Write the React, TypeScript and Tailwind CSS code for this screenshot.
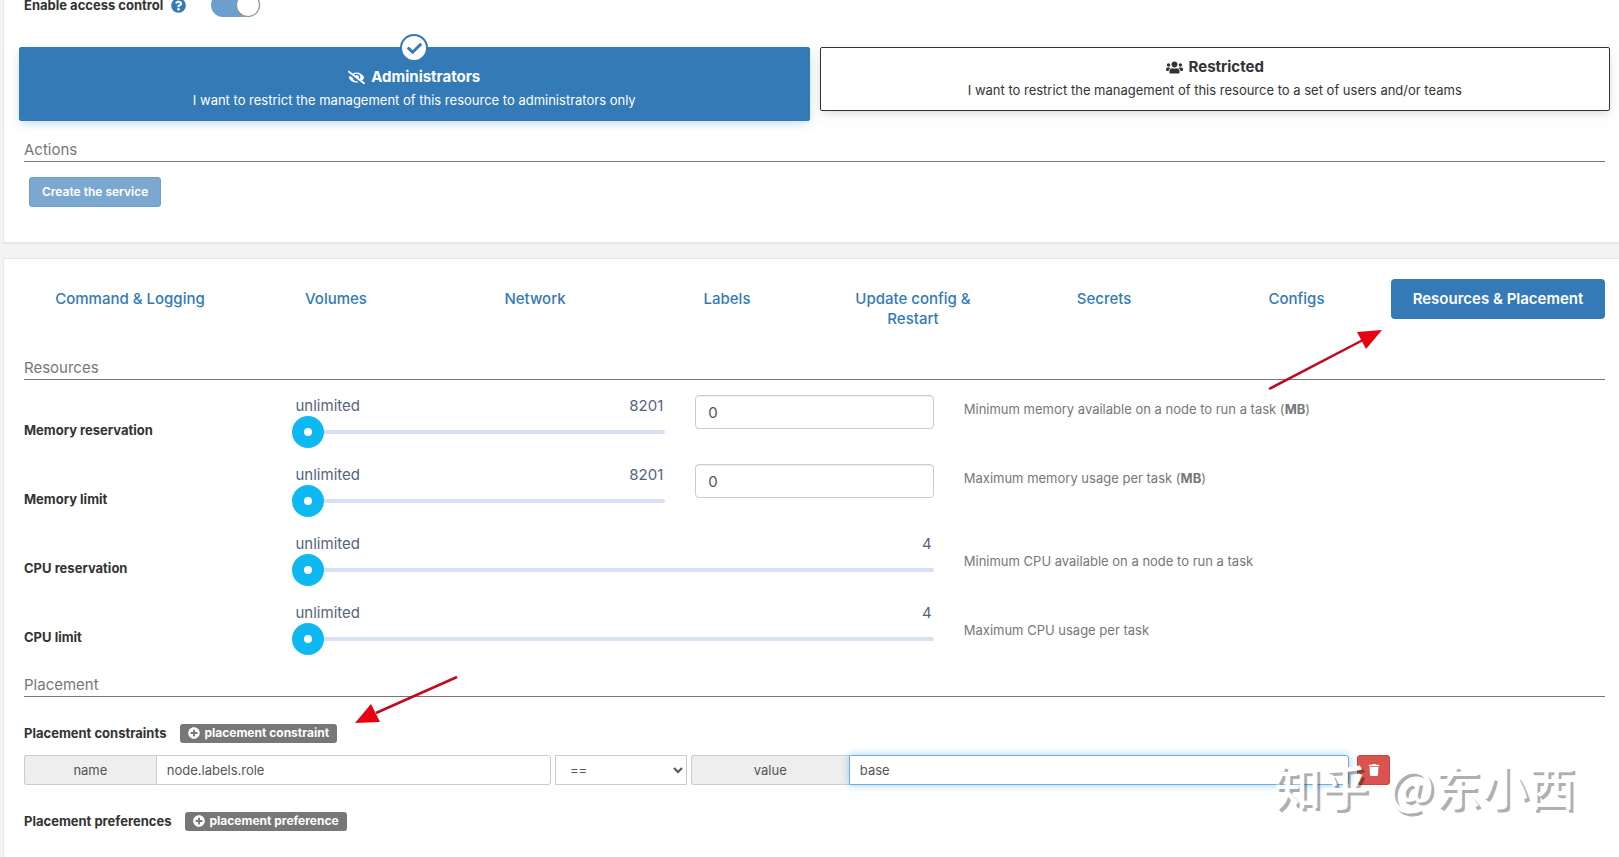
import { useState, type ReactNode } from 'react';
import { FaCheck, FaEyeSlash, FaPlusCircle, FaQuestionCircle, FaTrash, FaUsers } from 'react-icons/fa';

const tabs = [
  'Command & Logging',
  'Volumes',
  'Network',
  'Labels',
  'Update config & Restart',
  'Secrets',
  'Configs',
  'Resources & Placement',
];

const SectionTitle = ({ children }: { children: ReactNode }) => (
  <h2 className="border-b border-[#777] pb-px text-[15px] leading-5 text-[#777]">{children}</h2>
);

type OwnershipBoxProps = {
  icon: ReactNode;
  title: string;
  description: string;
  checked: boolean;
  onSelect: () => void;
};

const OwnershipBox = ({ icon, title, description, checked, onSelect }: OwnershipBoxProps) => (
  <label
    className={
      checked
        ? 'relative cursor-pointer rounded-xs border border-[#337ab7] bg-[#337ab7] pt-[19px] pb-2.5 text-white shadow-[0_3px_10px_-2px_rgba(100,170,200,0.5)]'
        : 'relative cursor-pointer rounded-xs border border-[#333] bg-white pt-[9px] pb-2.5 shadow-[0_3px_10px_-2px_rgba(160,160,160,0.5)]'
    }
  >
    <input type="radio" name="ownership" className="sr-only" checked={checked} onChange={onSelect} />
    {checked && (
      <span className="absolute -top-3.5 left-1/2 flex size-7 -translate-x-1/2 items-center justify-center rounded-full border-2 border-[#337ab7] bg-white text-[#337ab7]">
        <FaCheck size={15} />
      </span>
    )}
    <span className="flex items-center justify-center gap-1.5 text-[15px] leading-5 font-bold">
      {icon}
      {title}
    </span>
    <span className="mt-[3px] block">{description}</span>
  </label>
);

type SliderProps = {
  id: string;
  value: number;
  max: number;
  step?: number;
  onChange: (value: number) => void;
};

const Slider = ({ id, value, max, step = 1, onChange }: SliderProps) => (
  <div className="-ml-px">
    <div className="flex justify-between pr-0.5 pl-1 text-[15px] leading-5 text-[#55637d]">
      <span>{value === 0 ? 'unlimited' : value}</span>
      <span>{max}</span>
    </div>
    <input
      id={id}
      type="range"
      min={0}
      max={max}
      step={step}
      value={value}
      onChange={(e) => onChange(Number(e.target.value))}
      className="block h-8 w-full cursor-pointer appearance-none bg-transparent [&::-webkit-slider-runnable-track]:h-1 [&::-webkit-slider-runnable-track]:rounded-full [&::-webkit-slider-runnable-track]:bg-[#d8e0f3] [&::-webkit-slider-thumb]:-mt-3.5 [&::-webkit-slider-thumb]:size-8 [&::-webkit-slider-thumb]:appearance-none [&::-webkit-slider-thumb]:rounded-full [&::-webkit-slider-thumb]:border-12 [&::-webkit-slider-thumb]:border-[#0db9f0] [&::-webkit-slider-thumb]:bg-white"
    />
  </div>
);

type ResourceRowProps = {
  id: string;
  label: string;
  max: number;
  help: ReactNode;
  step?: number;
  withInput?: boolean;
};

const ResourceRow = ({ id, label, max, help, step, withInput }: ResourceRowProps) => {
  const [value, setValue] = useState(0);

  return (
    <div className="grid h-[69px] grid-cols-12 items-start gap-x-[30px]">
      <label htmlFor={id} className="col-span-2 pt-[25px] font-bold">
        {label}
      </label>
      <div className={withInput ? 'col-span-3 pt-px' : 'col-span-5 pt-px'}>
        <Slider id={id} value={value} max={max} step={step} onChange={setValue} />
      </div>
      {withInput && (
        <div className="col-span-2">
          <input
            type="number"
            aria-label={`${label} (MB)`}
            min={0}
            max={max}
            value={value}
            onChange={(e) => setValue(Number(e.target.value))}
            className="block h-[34px] w-full appearance-none rounded border border-[#ccc] bg-white px-3 text-[15px] text-[#555] shadow-[inset_0_1px_1px_rgba(0,0,0,0.075)]"
          />
        </div>
      )}
      <p className={withInput ? 'col-span-5 pt-1 text-[#777]' : 'col-span-5 pt-[18px] text-[#777]'}>{help}</p>
    </div>
  );
};

const AddButton = ({ children }: { children: ReactNode }) => (
  <button
    type="button"
    className="flex h-[19px] cursor-pointer items-center gap-1 rounded-[3px] bg-[#777] px-2 text-xs font-bold text-white"
  >
    <FaPlusCircle size={12} />
    {children}
  </button>
);

const App = () => {
  const [accessControl, setAccessControl] = useState(true);
  const [ownership, setOwnership] = useState('administrators');
  const [active, setActive] = useState('Resources & Placement');
  const [name, setName] = useState('node.labels.role');
  const [operator, setOperator] = useState('==');
  const [value, setValue] = useState('base');

  return (
    <div className="relative flex min-h-screen flex-col gap-3.5 overflow-hidden bg-[#f3f3f3] pl-[3px] font-[Inter,'Open_Sans',sans-serif] text-[13px] leading-5 text-[#333]">
      <section className="-mt-[7px] border-b-2 border-l border-[#e7e7e7] bg-white pr-3.5 pb-[35px] pl-5">
        <div className="flex h-6 items-center">
          <label htmlFor="access-control" className="font-bold">
            Enable access control
          </label>
          <FaQuestionCircle size={15} className="ml-2 text-[#337ab7]" />
          <input
            id="access-control"
            type="checkbox"
            checked={accessControl}
            onChange={(e) => setAccessControl(e.target.checked)}
            className="ml-[25px] h-6 w-[49px] cursor-pointer appearance-none rounded-full bg-[#bbb] before:block before:size-6 before:rounded-full before:border before:border-[#888] before:bg-white checked:bg-[#6c9fce] checked:before:ml-[25px]"
          />
        </div>

        {/* Ownership */}
        <div className="-mx-[5px] mt-[30px] grid grid-cols-2 items-start gap-2.5 text-center">
          <OwnershipBox
            icon={<FaEyeSlash size={17} />}
            title="Administrators"
            description="I want to restrict the management of this resource to administrators only"
            checked={ownership === 'administrators'}
            onSelect={() => setOwnership('administrators')}
          />
          <OwnershipBox
            icon={<FaUsers size={17} />}
            title="Restricted"
            description="I want to restrict the management of this resource to a set of users and/or teams"
            checked={ownership === 'restricted'}
            onSelect={() => setOwnership('restricted')}
          />
        </div>

        <div className="mt-[19px]">
          <SectionTitle>Actions</SectionTitle>
          <button
            type="button"
            disabled
            className="mt-[15px] ml-[5px] h-[30px] rounded-[3px] border border-[#719dc7] bg-[#7aa8d0] px-3 text-xs font-semibold text-white"
          >
            Create the service
          </button>
        </div>
      </section>

      <section className="flex-1 border-t border-l border-[#e7e7e7] bg-white pt-5 pr-3.5 pb-6 pl-5">
        <nav className="grid grid-cols-[212fr_200fr_198fr_186fr_186fr_196fr_189fr_214fr] items-start text-center text-[15px] leading-5">
          {tabs.map((tab) => (
            <a
              key={tab}
              href="#"
              onClick={(e) => {
                e.preventDefault();
                setActive(tab);
              }}
              className={
                tab === active
                  ? 'rounded bg-[#337ab7] px-3.5 py-2.5 font-semibold text-white'
                  : 'rounded px-3.5 py-2.5 font-medium text-[#337ab7]'
              }
            >
              {tab}
            </a>
          ))}
        </nav>

        <div className="mt-[19px] mb-[15px]">
          <SectionTitle>Resources</SectionTitle>
        </div>
        <ResourceRow
          id="memory-reservation"
          label="Memory reservation"
          max={8201}
          withInput
          help={
            <>
              Minimum memory available on a node to run a task (<b>MB</b>)
            </>
          }
        />
        <ResourceRow
          id="memory-limit"
          label="Memory limit"
          max={8201}
          withInput
          help={
            <>
              Maximum memory usage per task (<b>MB</b>)
            </>
          }
        />
        <ResourceRow
          id="cpu-reservation"
          label="CPU reservation"
          max={4}
          step={0.25}
          help="Minimum CPU available on a node to run a task"
        />
        <ResourceRow id="cpu-limit" label="CPU limit" max={4} step={0.25} help="Maximum CPU usage per task" />

        <div className="mt-1">
          <SectionTitle>Placement</SectionTitle>
        </div>

        {/* Placement constraints */}
        <div className="mt-[26px] flex items-center gap-3.5">
          <span className="font-bold">Placement constraints</span>
          <AddButton>placement constraint</AddButton>
        </div>
        <div className="mt-3 flex h-[30px] gap-1 text-[#555]">
          <div className="flex w-1/3 shrink-0">
            <label
              htmlFor="constraint-name"
              className="flex w-1/4 items-center justify-center rounded-l-[3px] border border-r-0 border-[#ccc] bg-[#eee]"
            >
              name
            </label>
            <input
              id="constraint-name"
              type="text"
              value={name}
              onChange={(e) => setName(e.target.value)}
              className="w-3/4 rounded-r-[3px] border border-[#ccc] bg-white px-2.5"
            />
          </div>
          <select
            aria-label="Operator"
            value={operator}
            onChange={(e) => setOperator(e.target.value)}
            className="w-1/12 shrink-0 border border-[#ccc] bg-white px-2.5"
          >
            <option>==</option>
            <option>!=</option>
          </select>
          <div className="flex w-5/12 shrink-0">
            <label
              htmlFor="constraint-value"
              className="flex w-[24%] items-center justify-center rounded-l-[3px] border border-r-0 border-[#ccc] bg-[#eee]"
            >
              value
            </label>
            <input
              id="constraint-value"
              type="text"
              value={value}
              onChange={(e) => setValue(e.target.value)}
              className="w-[76%] rounded-r-[3px] border border-[#66afe9] bg-white px-2.5 shadow-[0_0_8px_rgba(102,175,233,0.6)] outline-none"
            />
          </div>
          <button
            type="button"
            aria-label="Remove constraint"
            className="ml-1 flex w-[33px] cursor-pointer items-center justify-center rounded-[3px] border border-[#d43f3a] bg-[#d9534f] text-white"
          >
            <FaTrash size={12} />
          </button>
        </div>

        {/* Placement preferences */}
        <div className="mt-[26px] flex items-center gap-3.5">
          <span className="font-bold">Placement preferences</span>
          <AddButton>placement preference</AddButton>
        </div>
      </section>

      {/* Annotation arrows */}
      <svg
        className="pointer-events-none absolute top-[329px] right-[236px]"
        width="116"
        height="63"
        viewBox="0 0 116 63"
      >
        <path d="M2 60 96 11" stroke="#c00a22" strokeWidth="2.5" />
        <path d="M115 1 90 3 99 20Z" fill="#e60012" />
      </svg>
      <svg
        className="pointer-events-none absolute top-[675px] left-[354px]"
        width="105"
        height="50"
        viewBox="0 0 105 50"
      >
        <path d="M103 2 22 38" stroke="#c00a22" strokeWidth="2.5" />
        <path d="M1 48 17 29 26 47Z" fill="#e60012" />
      </svg>

      {/* Watermark */}
      <div className="pointer-events-none absolute right-11 bottom-10 flex items-center gap-5 font-['Noto_Sans_CJK_SC',sans-serif] text-[47px] leading-[64px] font-medium text-white [text-shadow:3px_3px_0_rgba(0,0,0,0.33)]">
        <span>知乎</span>
        <span>@东小西</span>
      </div>
    </div>
  );
};

export default App;
